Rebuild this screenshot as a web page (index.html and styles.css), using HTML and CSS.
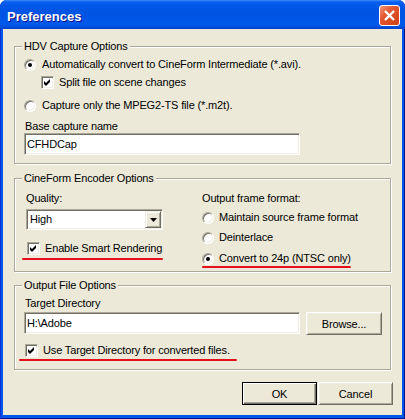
FILE: index.html
```html
<!DOCTYPE html>
<html>
<head>
<meta charset="utf-8">
<title>Preferences</title>
<link rel="stylesheet" href="styles.css">
</head>
<body>
<div class="window">
  <div class="titlebar">
    <span class="title">Preferences</span>
    <div class="close">
      <svg width="19" height="19" viewBox="0 0 19 19"><path d="M5 5 L14 14 M14 5 L5 14" stroke="#fff" stroke-width="2.4" fill="none"/></svg>
    </div>
  </div>
  <div class="client">
    <div class="group g1">
      <span class="legend">HDV Capture Options</span>
      <div class="row"><span class="radio on"></span>Automatically convert to CineForm Intermediate (*.avi).</div>
      <div class="row sub"><span class="check on"><svg width="9" height="9" viewBox="0 0 9 9"><polygon points="1,3 3,5 7,1 7,4 3,8 1,6" fill="#000"/></svg></span>Split file on scene changes</div>
      <div class="row r2"><span class="radio"></span>Capture only the MPEG2-TS file (*.m2t).</div>
      <div class="label">Base capture name</div>
      <div class="textbox">CFHDCap</div>
    </div>

    <div class="group g2">
      <span class="legend">CineForm Encoder Options</span>
      <div class="cols">
        <div class="col left">
          <div class="label">Quality:</div>
          <div class="combo">
            <span class="combo-text">High</span>
            <span class="drop"><svg width="7" height="4" viewBox="0 0 7 4"><polygon points="0,0 7,0 3.5,4" fill="#000"/></svg></span>
          </div>
          <div class="row smart"><span class="check on"><svg width="9" height="9" viewBox="0 0 9 9"><polygon points="1,3 3,5 7,1 7,4 3,8 1,6" fill="#000"/></svg></span>Enable Smart Rendering</div>
        </div>
        <div class="col right">
          <div class="label">Output frame format:</div>
          <div class="row o1"><span class="radio"></span>Maintain source frame format</div>
          <div class="row o2"><span class="radio"></span>Deinterlace</div>
          <div class="row o3"><span class="radio on"></span>Convert to 24p (NTSC only)</div>
        </div>
      </div>
      <span class="redline red-a"></span>
      <span class="redline red-b"></span>
    </div>

    <div class="group g3">
      <span class="legend">Output File Options</span>
      <div class="label">Target Directory</div>
      <div class="dirrow">
        <div class="textbox">H:\Adobe</div>
        <div class="btn browse">Browse...</div>
      </div>
      <div class="row usedir"><span class="check on"><svg width="9" height="9" viewBox="0 0 9 9"><polygon points="1,3 3,5 7,1 7,4 3,8 1,6" fill="#000"/></svg></span>Use Target Directory for converted files.</div>
      <span class="redline red-c"></span>
    </div>

    <div class="buttons">
      <div class="btn default">OK</div>
      <div class="btn">Cancel</div>
    </div>
  </div>
</div>
</body>
</html>
```

FILE: styles.css
```css
* { box-sizing: border-box; }
html, body { margin: 0; padding: 0; background: #ffffff; }
body {
  font-family: "Liberation Sans", Arial, sans-serif;
  font-size: 11px;
  letter-spacing: -0.15px;
  color: #000;
}
.window {
  width: 405px;
  height: 419px;
  display: flex;
  flex-direction: column;
  background: #0055EA;
  border-radius: 7px 7px 0 0;
  overflow: hidden;
  box-shadow: inset 1px 0 #0831D9, inset -1px 0 #00138C, inset 0 -1px #00138C;
}
.titlebar {
  flex: none;
  height: 29px;
  display: flex;
  justify-content: space-between;
  align-items: flex-start;
  padding: 0 5px 0 7px;
  background: linear-gradient(180deg, #3A8CFF 0, #0A5FEF 2px, #0056E6 6px, #0054E3 14px, #0058EA 24px, #0050DE 27px, #003CC8 29px);
}
.title {
  margin-top: 10px;
  font-weight: bold;
  font-size: 13px;
  line-height: 13px;
  letter-spacing: 0;
  color: #fff;
  text-shadow: 1px 1px #0F1089;
}
.close {
  margin-top: 5px;
  width: 21px;
  height: 21px;
  border: 1px solid #fff;
  border-radius: 3px;
  background: linear-gradient(135deg, #F3977A 0%, #E45B36 35%, #D8491F 70%, #C9431F 100%);
}
.close svg { display: block; }
.client {
  flex: 1;
  margin: 0 3px 4px 3px;
  background: #ECE9D8;
  padding: 17px 11px 0 11px;
  display: flex;
  flex-direction: column;
}
.group {
  position: relative;
  border: 1px solid #ACA899;
  box-shadow: 1px 1px 0 #fff, inset 1px 1px 0 #fff;
  flex: none;
}
.legend {
  position: absolute;
  top: -7px;
  left: 7px;
  padding: 0 2px;
  line-height: 13px;
  background: #ECE9D8;
  white-space: nowrap;
}
.row {
  display: flex;
  align-items: center;
  height: 13px;
  line-height: 13px;
  white-space: nowrap;
}
.label {
  height: 13px;
  line-height: 13px;
  white-space: nowrap;
}
.radio {
  position: relative;
  flex: none;
  width: 12px;
  height: 12px;
  margin-right: 6px;
  border-radius: 50%;
  border: 1px solid;
  border-color: #ACA899 #fff #fff #ACA899;
  box-shadow: inset 1px 1px #716F64, inset -1px -1px #F1EFE2;
  background: #fff;
}
.radio.on::after {
  content: "";
  position: absolute;
  left: 3px;
  top: 3px;
  width: 4px;
  height: 4px;
  border-radius: 50%;
  background: #000;
}
.check {
  flex: none;
  width: 13px;
  height: 13px;
  margin-right: 5px;
  border: 1px solid;
  border-color: #ACA899 #fff #fff #ACA899;
  box-shadow: inset 1px 1px #716F64, inset -1px -1px #F1EFE2;
  background: #fff;
  padding: 1px;
}
.check svg { display: block; }
.textbox {
  width: 276px;
  height: 22px;
  border: 1px solid;
  border-color: #ACA899 #fff #fff #ACA899;
  box-shadow: inset 1px 1px #716F64, inset -1px -1px #F1EFE2;
  background: #fff;
  padding-left: 2px;
  line-height: 20px;
  white-space: nowrap;
}

/* HDV group */
.g1 { height: 118px; padding: 11px 0 0 9px; }
.g1 .sub { margin-top: 5px; margin-left: 17px; }
.g1 .r2 { margin-top: 10px; }
.g1 .label { margin-top: 8px; margin-left: 1px; }

/* Encoder group */
.g2 { height: 94px; margin-top: 14px; padding: 13px 0 0 11px; }
.cols { display: grid; grid-template-columns: 176px 1fr; }
.col { display: flex; flex-direction: column; align-items: flex-start; }
.combo {
  margin-top: 4px;
  width: 137px;
  height: 21px;
  display: flex;
  justify-content: space-between;
  border: 1px solid;
  border-color: #ACA899 #fff #fff #ACA899;
  box-shadow: inset 1px 1px #716F64, inset -1px -1px #F1EFE2;
  background: #fff;
  padding: 1px;
}
.combo-text { padding-left: 2px; line-height: 17px; }
.drop {
  width: 16px;
  height: 17px;
  display: flex;
  align-items: center;
  justify-content: center;
  background: #ECE9D8;
  border: 1px solid;
  border-color: #F1EFE2 #716F64 #716F64 #F1EFE2;
  box-shadow: inset 1px 1px #fff, inset -1px -1px #ACA899;
}
.drop svg { display: block; }
.smart { margin-top: 12px; margin-left: 1px; }
.right .radio { margin-right: 5px; }
.o1 { margin-top: 6px; }
.o2 { margin-top: 7px; }
.o3 { margin-top: 8px; }

.redline {
  position: absolute;
  height: 2px;
  background: #E4101C;
  border-radius: 1px;
}
.red-a { left: 7px; top: 79px; width: 141px; }
.red-b { left: 187px; top: 87px; width: 149px; }

/* Output group */
.g3 { height: 85px; margin-top: 13px; padding: 11px 0 0 9px; }
.g3 .label { margin-left: 1px; }
.dirrow { display: flex; margin-top: 2px; align-items: flex-start; }
.usedir { margin-top: 9px; margin-left: 1px; }
.red-c { left: 4px; top: 73px; width: 218px; }

.btn {
  width: 75px;
  height: 23px;
  display: flex;
  align-items: center;
  justify-content: center;
  background: #ECE9D8;
  border: 1px solid;
  border-color: #fff #716F64 #716F64 #fff;
  box-shadow: inset 1px 1px #F1EFE2, inset -1px -1px #ACA899;
  white-space: nowrap;
}
.browse { width: 76px; margin-left: 6px; }
.btn.default {
  border-color: #000;
  box-shadow: inset 1px 1px #fff, inset -1px -1px #716F64, inset -2px -2px #ACA899;
}
.buttons {
  display: flex;
  justify-content: flex-end;
  gap: 1px;
  margin-top: 12px;
  margin-right: -2px;
}
```
